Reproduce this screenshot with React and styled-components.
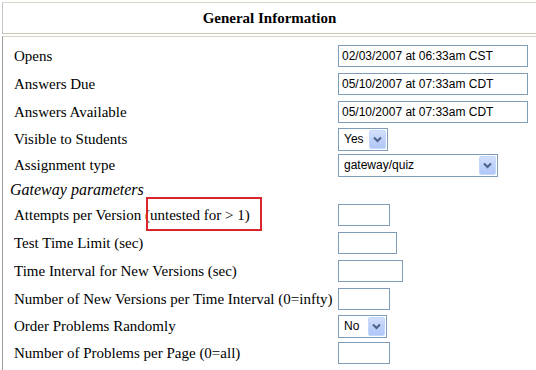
import React from "react";
import styled, { createGlobalStyle } from "styled-components";

const Global = createGlobalStyle`
  html, body { margin: 0; padding: 0; background: #fff; }
  body { font-family: "Liberation Serif", "Times New Roman", serif; color: #000; }
`;

const Frame = styled.div`
  padding: 2px 0 0 2px;
  width: 534px;
  overflow: hidden;
`;

const Header = styled.div`
  box-sizing: border-box;
  height: 32px;
  padding-top: 1px;
  border-top: 1px solid #d8d5c8;
  border-left: 1px solid #c4c4c4;
  border-bottom: 1px solid #c8c5b6;
  display: flex;
  align-items: center;
  justify-content: center;
  font-weight: bold;
  font-size: 15px;
`;

const Body = styled.div`
  margin-top: 2px;
  border-top: 1px solid #d8d5c8;
  border-left: 1px solid #9c9c9c;
  padding-top: 5px;
  height: 340px;
`;

const Row = styled.div`
  display: grid;
  grid-template-columns: 335px auto;
  align-items: center;
  height: ${(p) => p.$h || 28}px;
  font-size: 15px;
`;

const Label = styled.div`
  padding-left: 11px;
  white-space: nowrap;
`;

const Section = styled.div`
  padding-left: 7px;
  font-style: italic;
  font-size: 16px;
  height: 23px;
  display: flex;
  align-items: center;
`;

const Marked = styled.span`
  position: relative;
  &::after {
    content: "";
    position: absolute;
    left: 1px;
    right: -12px;
    top: -10px;
    bottom: -8px;
    border: 2px solid #d8262c;
  }
`;

const Field = styled.div`
  box-sizing: border-box;
  width: ${(p) => p.$w}px;
  height: 22px;
  border: 1px solid #7f9db9;
  background: #fff;
  font-family: "Liberation Sans", Arial, sans-serif;
  font-size: 12px;
  line-height: 20px;
  padding-left: 3px;
  white-space: nowrap;
`;

const SelectBox = styled.div`
  box-sizing: border-box;
  width: ${(p) => p.$w}px;
  height: 23px;
  border: 1px solid #7f9db9;
  background: #fff;
  display: flex;
  align-items: center;
  justify-content: space-between;
  font-family: "Liberation Sans", Arial, sans-serif;
  font-size: 12px;
  padding: 1px 1px 1px 5px;
`;

const SelectButton = styled.div`
  box-sizing: border-box;
  width: 17px;
  height: 19px;
  background: linear-gradient(180deg, #d3e0fd 0%, #bccffa 55%, #b2c8f8 100%);
  border: 1px solid #c5d6fc;
  border-radius: 2px;
  display: flex;
  align-items: center;
  justify-content: center;
`;

function Select({ w, value }) {
  return (
    <SelectBox $w={w}>
      <span>{value}</span>
      <SelectButton>
        <svg width="9" height="7" viewBox="0 0 9 7">
          <path d="M1 1.5 L4.5 5 L8 1.5" fill="none" stroke="#4d6185" strokeWidth="2" />
        </svg>
      </SelectButton>
    </SelectBox>
  );
}

const dateRows = [
  ["Opens", "02/03/2007 at 06:33am CST"],
  ["Answers Due", "05/10/2007 at 07:33am CDT"],
  ["Answers Available", "05/10/2007 at 07:33am CDT"],
];

export default function App() {
  return (
    <>
      <Global />
      <Frame>
        <Header>General Information</Header>
        <Body>
          {dateRows.map(([l, v]) => (
            <Row key={l}>
              <Label>{l}</Label>
              <Field $w={190}>{v}</Field>
            </Row>
          ))}
          <Row $h={26}>
            <Label>Visible to Students</Label>
            <Select w={50} value="Yes" />
          </Row>
          <Row $h={26}>
            <Label>Assignment type</Label>
            <Select w={160} value="gateway/quiz" />
          </Row>
          <Section>Gateway parameters</Section>
          <Row>
            <Label>
              Attempts per Version <Marked>(untested for &gt; 1)</Marked>
            </Label>
            <Field $w={52} />
          </Row>
          <Row>
            <Label>Test Time Limit (sec)</Label>
            <Field $w={59} />
          </Row>
          <Row>
            <Label>Time Interval for New Versions (sec)</Label>
            <Field $w={65} />
          </Row>
          <Row>
            <Label>Number of New Versions per Time Interval (0=infty)</Label>
            <Field $w={52} />
          </Row>
          <Row $h={26}>
            <Label>Order Problems Randomly</Label>
            <Select w={49} value="No" />
          </Row>
          <Row>
            <Label>Number of Problems per Page (0=all)</Label>
            <Field $w={52} />
          </Row>
        </Body>
      </Frame>
    </>
  );
}
